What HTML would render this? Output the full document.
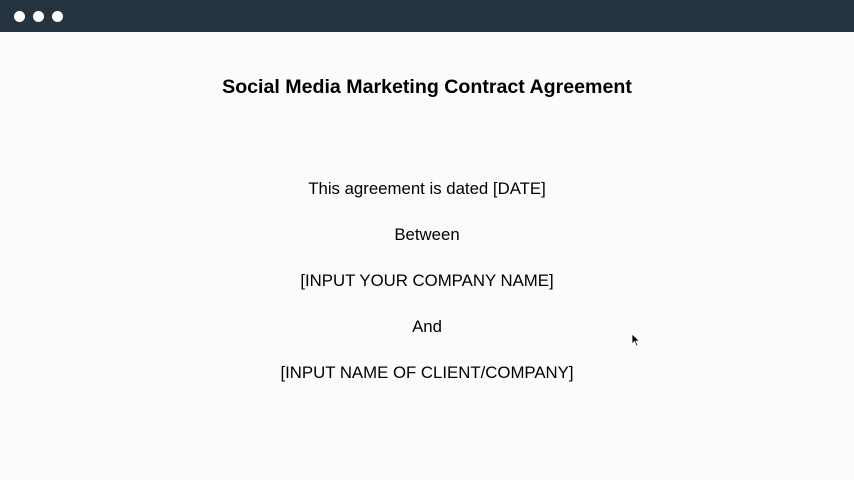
<!DOCTYPE html>
<html><head><meta charset="utf-8"><style>
html,body{margin:0;padding:0;}
body{width:854px;height:480px;overflow:hidden;background:#fbfbfa;font-family:"Liberation Sans",Arial,sans-serif;position:relative;color:#000;}
.bar{position:absolute;left:0;top:0;width:854px;height:32px;background:#263340;}
.dot{position:absolute;top:11px;width:11px;height:11px;border-radius:50%;background:#fff;}
.t{position:absolute;left:0;width:854px;text-align:center;}
h1{position:absolute;left:0;width:854px;top:76px;margin:0;text-align:center;font-size:19.6px;font-weight:bold;}
.p{font-size:16.8px;}
</style></head><body>
<div class="bar"><div class="dot" style="left:14px"></div><div class="dot" style="left:33px"></div><div class="dot" style="left:52px"></div></div>
<h1>Social Media Marketing Contract Agreement</h1>
<div class="t p" style="top:179px">This agreement is dated [DATE]</div>
<div class="t p" style="top:225px">Between</div>
<div class="t p" style="top:271px">[INPUT YOUR COMPANY NAME]</div>
<div class="t p" style="top:317px">And</div>
<div class="t p" style="top:363px">[INPUT NAME OF CLIENT/COMPANY]</div>
<svg style="position:absolute;left:631px;top:333px" width="10" height="14" viewBox="0 0 10 14"><path d="M1 1 L1 11 L3.5 8.5 L5.5 13 L7 12.3 L5 8 L8.5 8 Z" fill="#000" stroke="#fff" stroke-width="0.8"/></svg>
</body></html>
